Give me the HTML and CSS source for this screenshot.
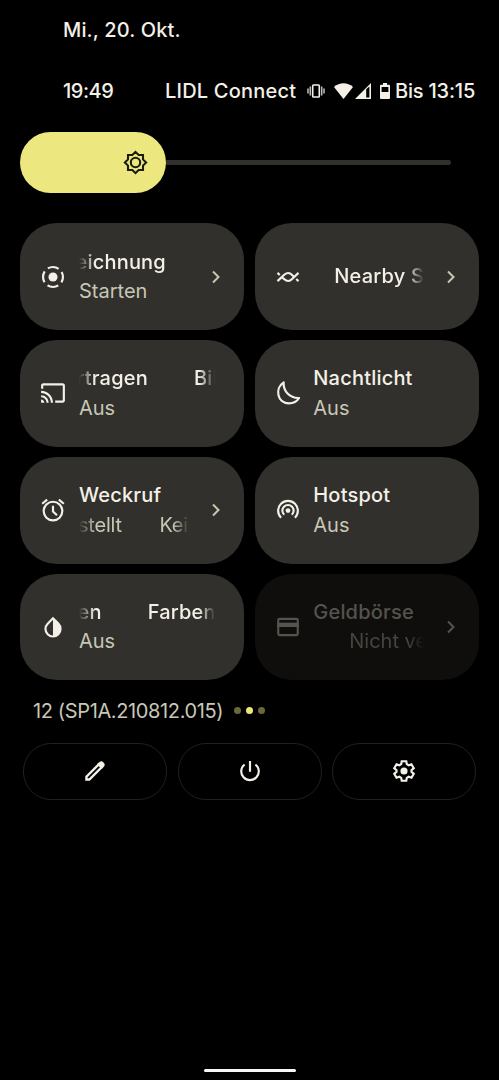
FILE: index.html
```
<!DOCTYPE html>
<html lang="de">
<head>
    <meta charset="utf-8">
    <meta name="viewport" content="width=device-width, initial-scale=1.0">
    <title>Schnelleinstellungen</title>
    <link rel="stylesheet" href="styles.css">
</head>
<body>
<div class="date">Mi., 20. Okt.</div>
<div class="status">
    <span class="clock">19:49</span>
    <span class="carrier">LIDL Connect</span>
    <svg class="i-vibrate" viewBox="0 0 18 14"><path d="M1 4.500v5M3.300 2.500v9M14.700 2.500v9M17 4.500v5" stroke-width="1.500" opacity=".8"/><rect x="5.700" y="1" width="6.600" height="12" rx=".8" stroke-width="1.600"/></svg>
    <svg class="i-wifi" viewBox="0 0 19 16"><path class="fill" d="M0 4C5.500-1 13.500-1 19 4L9.500 16z"/></svg>
    <svg class="i-signal" viewBox="0 0 16 16"><path class="fill" fill-rule="evenodd" d="M16 0v16H0zM11.200 6.200v8.400h3.200v-11z"/></svg>
    <svg class="i-battery" viewBox="0 0 10 16"><path class="fill" fill-rule="evenodd" d="M3 0h4v1.700h2q1 0 1 1V15q0 1-1 1H1q-1 0-1-1V2.700q0-1 1-1h2zM1.600 4v5h6.800V4z"/></svg>
    <span class="until">Bis 13:15</span>
</div>

<div class="slider">
    <div class="thumb">
        <svg viewBox="0 0 24 24"><path d="M12 1.800L15 4.800H19.200V9L22.200 12L19.200 15V19.200H15L12 22.200L9 19.200H4.800V15L1.800 12L4.800 9V4.800H9z"/><circle cx="12" cy="12" r="4.500"/></svg>
    </div>
    <div class="track"></div>
</div>

<div class="tiles">
    <div class="tile">
        <svg class="icon" viewBox="0 0 24 24"><circle class="fill" cx="12" cy="12" r="4.200"/><circle cx="12" cy="12" r="9.200" stroke-dasharray="10.450 4" stroke-dashoffset="5.220"/></svg>
        <div class="text">
            <div class="title fade-l"><span class="cut-e">eichnung</span></div>
            <div class="sub">Starten</div>
        </div>
        <svg class="chevron" viewBox="0 0 8 14"><path d="M1 1.500L6.500 7L1 12.500"/></svg>
    </div>
    <div class="tile">
        <svg class="icon" viewBox="0 0 24 24"><path d="M2.300 15.800L8 10.400Q12 6.300 16 10.300L17 11.300M21.700 8.200L16 13.600Q12 17.700 8 13.700L7 12.700M2.300 8.200L4.400 10.100M19.600 13.900L21.700 15.800"/></svg>
        <div class="text">
            <div class="title fade-r"><span class="in-nearby">Nearby S</span></div>
        </div>
        <svg class="chevron" viewBox="0 0 8 14"><path d="M1 1.500L6.500 7L1 12.500"/></svg>
    </div>
    <div class="tile">
        <svg class="icon" viewBox="0 0 24 24"><path class="fill" d="M21 3H3c-1.100 0-2 .9-2 2v3h2V5h18v14h-7v2h7c1.100 0 2-.9 2-2V5c0-1.100-.9-2-2-2zM1 18v3h3c0-1.660-1.340-3-3-3zm0-4v2c2.760 0 5 2.240 5 5h2c0-3.870-3.130-7-7-7zm0-4v2c4.970 0 9 4.030 9 9h2c0-6.080-4.930-11-11-11z"/></svg>
        <div class="text">
            <div class="title fade-l fade-r"><span class="cut-r">rtragen</span><span class="next">Bil</span></div>
            <div class="sub">Aus</div>
        </div>
    </div>
    <div class="tile">
        <svg class="icon" viewBox="0 0 24 24"><path stroke-linejoin="round" d="M8 2.200C-.5 7.500 2 21.500 12.800 21.500C16.700 21.500 20.300 19.800 22.200 16.600C13.500 17 7.400 10 8 2.200z"/></svg>
        <div class="text">
            <div class="title">Nachtlicht</div>
            <div class="sub">Aus</div>
        </div>
    </div>
    <div class="tile">
        <svg class="icon" viewBox="0 0 24 24"><circle cx="12" cy="13" r="8.600"/><path d="M12 8v5.500l3.700 3.300M2 6.200L6.600 2.400M22 6.200L17.400 2.400"/></svg>
        <div class="text">
            <div class="title">Weckruf</div>
            <div class="sub fade-l fade-r"><span class="cut-s">stellt</span><span class="next">Kei</span></div>
        </div>
        <svg class="chevron" viewBox="0 0 8 14"><path d="M1 1.500L6.500 7L1 12.500"/></svg>
    </div>
    <div class="tile">
        <svg class="icon" viewBox="0 0 24 24"><circle class="fill" cx="12" cy="12.500" r="2.200"/><path d="M8.500 16.400A5.200 5.200 0 1 1 15.500 16.400M5.600 19.200A9.100 9.100 0 1 1 18.400 19.200"/></svg>
        <div class="text">
            <div class="title">Hotspot</div>
            <div class="sub">Aus</div>
        </div>
    </div>
    <div class="tile">
        <svg class="icon" viewBox="0 0 24 24"><path d="M12 4L7.100 8.900A6.950 6.950 0 1 0 16.900 8.900z"/><path class="fill" d="M12 4L16.900 8.900A6.950 6.950 0 0 1 12 20.800z"/></svg>
        <div class="text">
            <div class="title fade-l fade-r"><span class="cut-en">en</span><span class="next">Farben</span></div>
            <div class="sub">Aus</div>
        </div>
    </div>
    <div class="tile off">
        <svg class="icon" viewBox="0 0 24 24"><rect x="3" y="4.500" width="18" height="15" rx="1.200"/><path class="fill" d="M2 8h20v4H2z"/></svg>
        <div class="text">
            <div class="title">Geldbörse</div>
            <div class="sub fade-r"><span class="in-nicht">Nicht ve</span></div>
        </div>
        <svg class="chevron" viewBox="0 0 8 14"><path d="M1 1.500L6.500 7L1 12.500"/></svg>
    </div>
</div>

<div class="build">
    <span class="version">12 (SP1A.210812.015)</span>
    <i class="dot"></i><i class="dot on"></i><i class="dot"></i>
</div>

<div class="actions">
    <div class="btn"><svg class="icon" viewBox="0 0 24 24"><path stroke-width="2.200" d="M4.100 19.900V17.200L15.400 5.900L18.100 8.600L6.800 19.900z"/><path class="fill" d="M14 5.600L16.400 3.500Q18.200 2.300 19.800 4.200Q21.700 5.800 20.500 7.600L18.400 10z"/></svg></div>
    <div class="btn"><svg class="icon" viewBox="0 0 24 24"><path d="M12 2.800v10M7 6A8.100 8.100 0 1 0 17 6"/></svg></div>
    <div class="btn"><svg class="icon" viewBox="0 0 24 24"><path d="M9.900 3h4.200l.5 2.700 1.700 1 2.600-.9 2.100 3.600-2.100 1.800v1.600l2.100 1.800-2.100 3.600-2.600-.9-1.700 1-.5 2.700H9.900l-.5-2.700-1.700-1-2.600.9L3 14.600l2.100-1.800v-1.600L3 9.400l2.100-3.600 2.600.9 1.700-1z"/><circle class="fill" cx="12" cy="12" r="3.300"/></svg></div>
</div>

<div class="home"></div>
</body>
</html>
```
FILE: styles.css
```
html, body{
    margin: 0;
    padding: 0;
    height: 100%;
}
body{
    display: flex;
    flex-direction: column;
    box-sizing: border-box;
    background: #000;
    color: #f4f0e7;
    font: 500 20px/30px Inter, Roboto, "Noto Sans", sans-serif;
    white-space: nowrap;
    overflow: hidden;
}
svg{
    display: block;
    flex: none;
    fill: none;
    stroke: currentColor;
    stroke-width: 2;
}
svg .fill{ fill: currentColor; stroke: none;}

/* status bar */
.date{
    padding: 15px 0 0 63px;
    letter-spacing: .15px;
}
.status{
    display: flex;
    align-items: center;
    margin-top: 31px;
    padding-left: 63px;
}
.clock{ width: 102px; letter-spacing: -.45px;}
.carrier{ width: 142px; letter-spacing: .2px;}
.until{ letter-spacing: -.2px;}
.i-vibrate{ width: 18px; height: 14px;}
.i-wifi{ width: 19px; height: 16px; margin-left: 9px;}
.i-signal{ width: 16px; height: 16px; margin-left: 1.500px;}
.i-battery{ width: 10px; height: 16px; margin: 0 5.500px 0 9px;}

/* brightness */
.slider{
    display: flex;
    align-items: center;
    margin: 26px 48px 0 20px;
}
.thumb{
    display: flex;
    align-items: center;
    justify-content: flex-end;
    box-sizing: border-box;
    width: 146px; height: 61px;
    padding-right: 18px;
    border-radius: 30.500px;
    background: #ece77f;
    color: #1c1c10;
}
.thumb svg{ width: 25px; height: 25px;}
.track{
    flex: 1;
    height: 5px;
    border-radius: 0 3px 3px 0;
    background: #31302c;
}

/* tiles */
.tiles{
    display: grid;
    grid-template-columns: 224px 224px;
    grid-auto-rows: 106.700px;
    gap: 10.100px 10.300px;
    margin: 30.300px 0 0 20.400px;
}
.tile{
    display: flex;
    align-items: center;
    box-sizing: border-box;
    padding: 0 24px 0 20px;
    border-radius: 37px;
    background: #31302c;
}
.icon{ width: 26px; height: 26px;}
.text{
    flex: 1;
    min-width: 0;
    margin: 1px 5px 0 12.600px;
}
.title, .sub{
    height: 29.500px;
    line-height: 29.500px;
    overflow: hidden;
}
.title{ letter-spacing: .2px;}
.sub{
    color: #c8c7b5;
    font-weight: 400;
}
.chevron{
    width: 8px; height: 14px;
    color: #c8c7b5;
}
.text + .chevron{ margin-left: 18px;}
.off{ background: #0f0e0c; color: #55534e;}
.off .sub{ color: #45443d;}
.off .chevron{ color: #55534e;}

/* scrolling labels fade out at their edges */
.fade-l{
    -webkit-mask-image: linear-gradient(90deg, transparent, #000 16px);
}
.fade-r{
    -webkit-mask-image: linear-gradient(270deg, transparent, #000 16px);
}
.fade-l.fade-r{
    -webkit-mask-image: linear-gradient(90deg, transparent, #000 16px, #000 calc(100% - 16px), transparent);
}
.cut-e{ margin-left: -3.500px;}
.cut-r{ margin-left: -2.500px;}
.cut-s{ margin-left: -1px;}
.cut-en{ margin-left: -1.500px;}
.next{ margin-left: 46px;}
.sub .cut-s, .sub .next{ letter-spacing: -.2px;}
.sub .next{ margin-left: 37.500px;}
.in-nearby{ margin-left: 21px;}
.in-nicht{ margin-left: 36px;}

/* build number and pager */
.build{
    display: flex;
    align-items: center;
    margin-top: 15.500px;
    padding-left: 33px;
    color: #c8c7b5;
    font-weight: 400;
}
.version{ width: 201px; letter-spacing: -.37px;}
.dot{
    width: 7px; height: 7px;
    margin-right: 5px;
    border-radius: 50%;
    background: #6a6739;
}
.dot.on{ background: #ece77f;}

.actions{
    display: grid;
    grid-template-columns: repeat(3, 1fr);
    gap: 10.500px;
    margin: 17px 23px 0;
}
.btn{
    display: flex;
    align-items: center;
    justify-content: center;
    box-sizing: border-box;
    height: 57px;
    border: 1px solid #22211c;
    border-radius: 28px;
}

.home{
    width: 92px; height: 3px;
    margin: auto auto 8px;
    border-radius: 2px;
    background: #f8f8f8;
}
```
